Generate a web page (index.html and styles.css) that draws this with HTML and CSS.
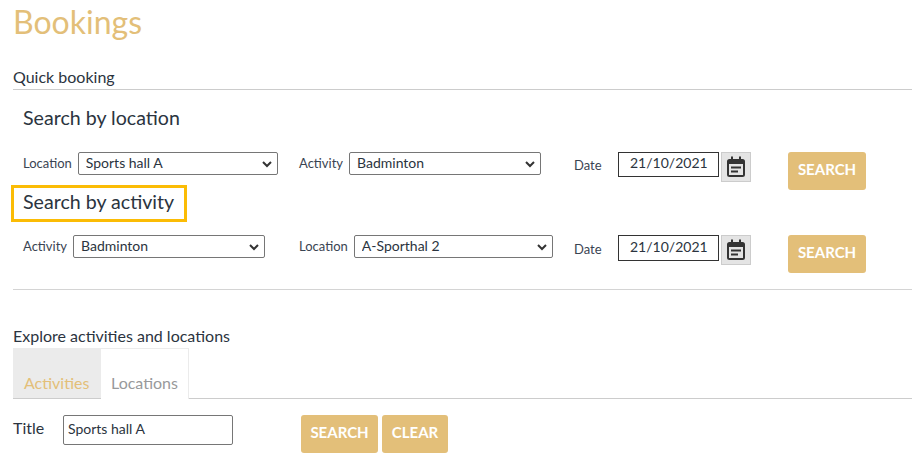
FILE: index.html
```html
<!DOCTYPE html>
<html lang="en">
<head>
<meta charset="utf-8">
<title>Bookings</title>
<link rel="stylesheet" href="styles.css">
</head>
<body>
<main class="page">
  <h1 class="title">Bookings</h1>
  <h2 class="section first">Quick booking</h2>
  <div class="quick">
    <h3 class="sub">Search by location</h3>
    <div class="row">
      <div class="cell c1"><label class="lbl">Location</label><select class="sel w200"><option>Sports hall A</option></select></div>
      <div class="cell c2"><label class="lbl">Activity</label><select class="sel w192"><option>Badminton</option></select></div>
      <div class="cell c3"><label class="lbl date">Date</label><input class="dt" value="21/10/2021"><button class="cal" aria-label="Calendar"><svg viewBox="0 0 24 24" width="24" height="24"><path fill="#333" d="M7 1.5h2V4h6V1.500h2V4h1.500A2.500 2.500 0 0 1 21 6.500v13a2.500 2.500 0 0 1-2.500 2.500h-13A2.500 2.500 0 0 1 3 19.500v-13A2.500 2.500 0 0 1 5.500 4H7zM5 9v11h14V9zm2 2.500h10v2H7zm0 4h7v2H7z" fill-rule="evenodd"/></svg></button></div>
      <button class="btn">SEARCH</button>
    </div>
    <h3 class="sub boxed">Search by activity</h3>
    <div class="row r2">
      <div class="cell c1"><label class="lbl">Activity</label><select class="sel w192"><option>Badminton</option></select></div>
      <div class="cell c2"><label class="lbl">Location</label><select class="sel w199"><option>A-Sporthal 2</option></select></div>
      <div class="cell c3"><label class="lbl date">Date</label><input class="dt tall" value="21/10/2021"><button class="cal" aria-label="Calendar"><svg viewBox="0 0 24 24" width="24" height="24"><path fill="#333" d="M7 1.5h2V4h6V1.500h2V4h1.500A2.500 2.500 0 0 1 21 6.500v13a2.500 2.500 0 0 1-2.500 2.500h-13A2.500 2.500 0 0 1 3 19.500v-13A2.500 2.500 0 0 1 5.500 4H7zM5 9v11h14V9zm2 2.500h10v2H7zm0 4h7v2H7z" fill-rule="evenodd"/></svg></button></div>
      <button class="btn">SEARCH</button>
    </div>
  </div>
  <h2 class="section second">Explore activities and locations</h2>
  <div class="tabs">
    <div class="tab off">Activities</div>
    <div class="tab on">Locations</div>
  </div>
  <div class="filter">
    <label class="lbl-title">Title</label>
    <input class="txt" value="Sports hall A">
    <button class="btn">SEARCH</button>
    <button class="btn">CLEAR</button>
  </div>
</main>
</body>
</html>
```
FILE: styles.css
```css
* { box-sizing: border-box; }
html, body { margin: 0; padding: 0; background: #fff; }
body { font-family: Lato, sans-serif; color: #2b3440; width: 912px; height: 460px; overflow: hidden; }
.page { padding: 0 0 0 13px; }
.title { margin: 0; height: 47px; font-size: 32px; line-height: 44px; font-weight: 400; color: #e3bf79; }
.section { margin: 0; font-size: 16px; font-weight: 400; line-height: 20px; color: #2b3440; }
.section.first { padding-top: 20px; box-sizing: content-box; height: 22px; border-bottom: 1px solid #ccc; }
.quick { border-bottom: 1px solid #d4d4d4; height: 200px; }
.sub { margin: 0; font-size: 19.6px; font-weight: 400; line-height: 28px; padding-left: 10px; color: #2b3440; }
.quick > .sub:first-child { padding-top: 14px; height: 62px; }
.boxed { width: 176px; height: 37px; margin-left: -2px; margin-top: -5px; border: 3px solid #fbbc05; padding: 0 0 0 9px; }
.row { display: flex; align-items: flex-start; height: 38px; padding-left: 10px; }
.r2 { margin-top: 13px; }
.cell { display: flex; align-items: flex-start; }
.c1 { width: 276px; }
.c2 { width: 275px; }
.c3 { width: 214px; }
.lbl { font-size: 13px; line-height: 23px; color: #3a4452; margin-right: 6px; }
.lbl.date { width: 44px; margin-right: 0; line-height: 26px; }
.r2 .lbl.date { line-height: 28px; }
.sel {
  height: 23px; font-family: Lato, sans-serif; font-size: 14px; color: #2b3440; border: 1px solid #767676; border-radius: 2px; padding: 0 20px 3px 7px;
  appearance: none; -webkit-appearance: none;
  background: #fff url("data:image/svg+xml,%3Csvg xmlns='http://www.w3.org/2000/svg' width='12' height='8' viewBox='0 0 12 8'%3E%3Cpath d='M2 2l4 4 4-4' fill='none' stroke='%23333' stroke-width='2'/%3E%3C/svg%3E") no-repeat right 4px center;
}
.w200 { width: 200px; }
.w192 { width: 192px; }
.w199 { width: 199px; }
.dt { width: 101px; height: 25px; border: 1px solid #333; padding: 0 0 4px 11px; font-family: Lato, sans-serif; font-size: 14px; color: #2b3440; background: #fff; }
.dt.tall { height: 26px; }
.cal { width: 30px; height: 30px; margin-left: 2px; padding: 0; background: #e4e4e4; border: 1px solid #ccc; display: flex; align-items: center; justify-content: center; }
.btn { height: 38px; padding: 0 0 5px; border: 0; border-radius: 3px; background: #e3bf79; color: #fff; font-family: Lato, sans-serif; font-size: 15px; font-weight: 700; width: 78px; }
.second { margin-top: 36px; }
.tabs { display: flex; height: 51px; margin-top: 2px; border-bottom: 1px solid #ccc; }
.tab { font-size: 16px; padding-top: 24px; line-height: 22px; }
.off { width: 88px; height: 50px; background: #ebebeb; color: #e3bf79; padding-left: 11px; }
.on { width: 88px; height: 51px; padding-top: 23px; color: #98999b; background: #fff; border: 1px solid #ebebeb; border-bottom: 0; border-left: 0; padding-left: 10px; }
.filter { display: flex; align-items: flex-start; margin-top: 16px; }
.lbl-title { font-size: 16px; line-height: 26px; width: 50px; }
.txt { width: 170px; height: 30px; border: 1px solid #767676; border-radius: 2px; padding: 0 4px 3px 4px; font-family: Lato, sans-serif; font-size: 14px; color: #2b3440; }
.filter .btn:nth-of-type(1) { width: 77px; margin-left: 68px; }
.filter .btn:nth-of-type(2) { width: 66px; margin-left: 4px; }
```
